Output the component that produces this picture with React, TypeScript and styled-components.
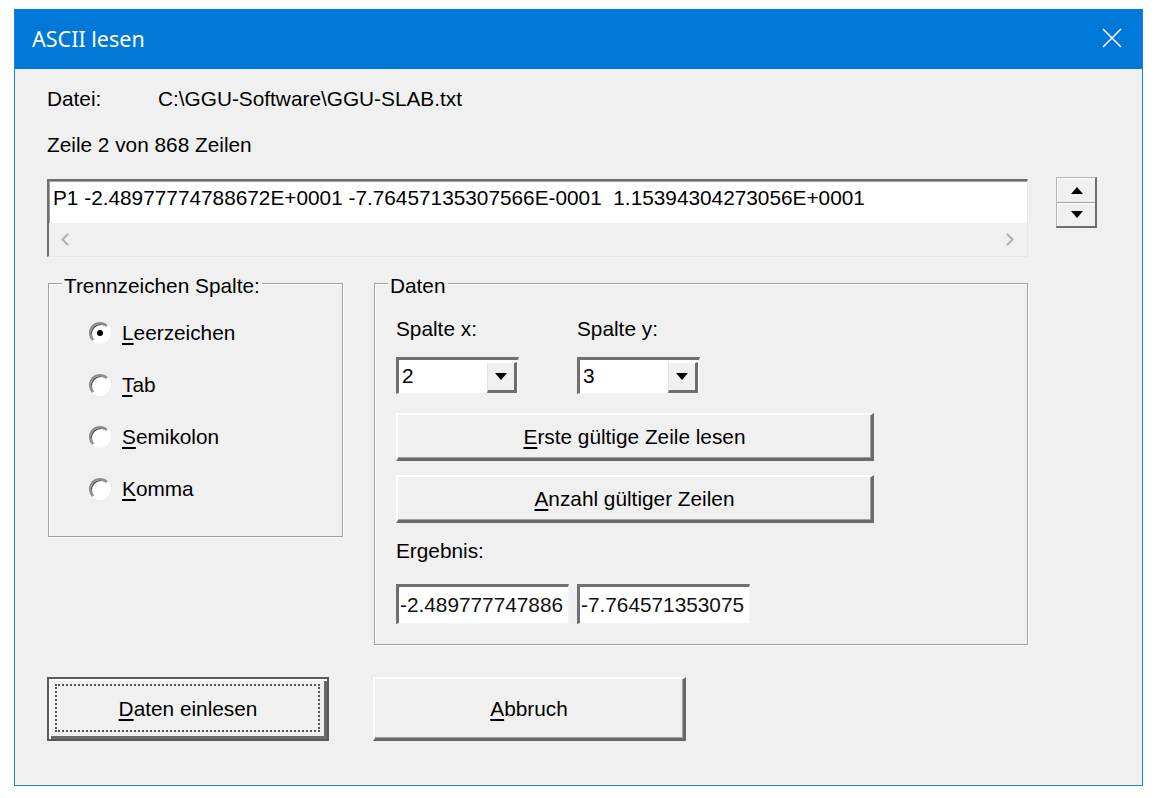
import React from 'react';
import styled, { createGlobalStyle } from 'styled-components';

const GlobalStyle = createGlobalStyle`
  html, body {
    margin: 0;
    padding: 0;
    background: #fff;
  }
  body {
    font-family: "Liberation Sans", Arial, sans-serif;
  }
`;

const Window = styled.div`
  margin: 9px 0 0 14px;
  width: 1129px;
  height: 777px;
  box-sizing: border-box;
  border: 1px solid #1883d7;
  border-top: none;
  display: flex;
  flex-direction: column;
  background: #f0f0f0;
`;

const TitleBar = styled.div`
  flex: none;
  height: 60px;
  background: #0078d7;
  display: flex;
  align-items: center;
  justify-content: space-between;
  padding: 0 20px 0 17px;
  color: #fff;
  font-family: "Noto Sans", "Open Sans", sans-serif;
  font-size: 21.5px;
`;

const Title = styled.span`
  margin-top: -1px;
`;

const CloseIcon = styled.svg`
  display: block;
  margin-top: -2px;
`;

const Body = styled.div`
  flex: 1;
  display: flex;
  flex-direction: column;
  padding: 0 32px;
  font-size: 20.8px;
  color: #000;
`;

const InfoRow = styled.div<{ $gap: number }>`
  display: flex;
  height: 24px;
  line-height: 24px;
  margin-top: ${p => p.$gap}px;
  white-space: nowrap;
`;

const InfoLabel = styled.span`
  width: 111px;
  flex: none;
`;

const SourceRow = styled.div`
  display: flex;
  align-items: flex-start;
  gap: 28px;
  margin-top: 22px;
`;

const LineBox = styled.div`
  width: 981px;
  height: 78px;
  box-sizing: border-box;
  border-style: solid;
  border-width: 2px 1px 1px 2px;
  border-color: #6d6d6d #e6e6e6 #e6e6e6 #6d6d6d;
  box-shadow: inset 1px 1px 0 #a0a0a0;
  background: #fff;
  display: flex;
  flex-direction: column;
`;

const LineText = styled.div`
  flex: 1;
  padding: 5px 0 0 4px;
  line-height: 24px;
  white-space: pre;
  overflow: hidden;
`;

const HScroll = styled.div`
  flex: none;
  height: 33px;
  background: #f0f0f0;
  display: flex;
  align-items: center;
  justify-content: space-between;
  padding: 0 13px 0 12px;
`;

const Spin = styled.div`
  margin-top: -2px;
  width: 41px;
  height: 51px;
  box-sizing: border-box;
  border-style: solid;
  border-width: 1px 2px 2px 1px;
  border-color: #b4b4b4 #6d6d6d #6d6d6d #b4b4b4;
  display: flex;
  flex-direction: column;
  gap: 1px;
  background: #a0a0a0;
`;

const SpinHalf = styled.div`
  flex: 1;
  background: #f0f0f0;
  border-top: 1px solid #fff;
  border-left: 1px solid #fff;
  display: flex;
  align-items: center;
  justify-content: center;
`;

const GroupRow = styled.div`
  display: flex;
  align-items: flex-start;
  gap: 31px;
  margin-top: 26px;
  padding-left: 1px;
`;

const Group = styled.div<{ $w: number; $h: number }>`
  position: relative;
  box-sizing: border-box;
  width: ${p => p.$w}px;
  height: ${p => p.$h}px;
  border: 1px solid #a0a0a0;
  box-shadow: inset 1px 1px 0 #fff, 1px 1px 0 #fff;
`;

const Legend = styled.span`
  position: absolute;
  top: -10px;
  left: 13px;
  padding: 0 2px;
  line-height: 24px;
  background: #f0f0f0;
  white-space: nowrap;
`;

const RadioList = styled.div`
  display: flex;
  flex-direction: column;
  padding: 23px 0 0 40px;
`;

const RadioRow = styled.label`
  display: flex;
  align-items: center;
  gap: 11px;
  height: 52px;
`;

const RadioCircle = styled.span<{ $checked?: boolean }>`
  flex: none;
  width: 22px;
  height: 22px;
  box-sizing: border-box;
  border-radius: 50%;
  border: 2px solid;
  border-color: #8c8c8c #fff #fff #8c8c8c;
  box-shadow: inset 1px 1px 0 #505050;
  background: #fff;
  display: flex;
  align-items: center;
  justify-content: center;

  &::after {
    content: '';
    display: ${p => (p.$checked ? 'block' : 'none')};
    width: 6px;
    height: 6px;
    border-radius: 50%;
    background: #000;
  }
`;

const Key = styled.span`
  text-decoration: underline;
  text-decoration-thickness: 2px;
  text-underline-offset: 3px;
`;

const DataPane = styled.div`
  display: flex;
  flex-direction: column;
  align-items: flex-start;
  padding: 33px 0 0 21px;
`;

const ComboRow = styled.div`
  display: flex;
  gap: 58px;
`;

const ComboColumn = styled.div`
  display: flex;
  flex-direction: column;
  gap: 16px;
`;

const FieldLabel = styled.span<{ $top?: number }>`
  line-height: 24px;
  margin-top: ${p => p.$top ?? 0}px;
`;

const Combo = styled.div`
  width: 123px;
  height: 37px;
  box-sizing: border-box;
  border-style: solid;
  border-width: 3px 1px 1px 3px;
  border-color: #707070 #f4f4f4 #f4f4f4 #707070;
  background: #fff;
  display: flex;
  align-items: stretch;
  padding: 2px 1px 0 0;
`;

const ComboValue = styled.span`
  flex: 1;
  padding-left: 3px;
  line-height: 28px;
`;

const DropButton = styled.span`
  width: 30px;
  box-sizing: border-box;
  background: #f0f0f0;
  border-style: solid;
  border-width: 1px 3px 3px 1px;
  border-color: #fff #6d6d6d #6d6d6d #e3e3e3;
  display: flex;
  align-items: center;
  justify-content: center;
`;

const PushButton = styled.button<{ $w: number; $h: number; $top?: number; $default?: boolean }>`
  position: relative;
  width: ${p => p.$w}px;
  height: ${p => p.$h}px;
  margin: ${p => p.$top ?? 0}px 0 0 0;
  padding: 0;
  box-sizing: border-box;
  background: #f0f0f0;
  font: inherit;
  color: #000;
  border-style: solid;
  border-width: ${p => (p.$default ? '2px' : '2px 3px 3px 2px')};
  border-color: ${p => (p.$default ? '#5a5a5a' : '#fff #6a6a6a #6a6a6a #fff')};
  box-shadow: ${p =>
    p.$default
      ? 'inset 2px 2px 0 #fff, inset -3px -3px 0 #6a6a6a'
      : 'inset -1px -1px 0 #a0a0a0'};

  &::after {
    content: '';
    display: ${p => (p.$default ? 'block' : 'none')};
    position: absolute;
    inset: 5px 7px 7px 6px;
    border: 2px dotted #555;
  }
`;

const ResultRow = styled.div`
  display: flex;
  gap: 8px;
  margin-top: 21px;
`;

const ResultField = styled.div`
  width: 173px;
  height: 40px;
  box-sizing: border-box;
  border-style: solid;
  border-width: 3px 1px 1px 3px;
  border-color: #707070 #f4f4f4 #f4f4f4 #707070;
  background: #fff;
  padding: 0 0 0 1px;
  line-height: 35px;
  white-space: nowrap;
  overflow: hidden;
  color: #111;
`;

const ButtonRow = styled.div`
  display: flex;
  gap: 44px;
  margin-top: 32px;
`;

const Triangle = ({ up }: { up?: boolean }) => (
  <svg width="12" height="7" viewBox="0 0 12 7">
    <polygon points={up ? '6,0 12,7 0,7' : '0,0 12,0 6,7'} fill="#000" />
  </svg>
);

const Chevron = ({ right }: { right?: boolean }) => (
  <svg width="8" height="13" viewBox="0 0 8 13">
    <polyline
      points={right ? '1,1 6.5,6.5 1,12' : '7,1 1.5,6.5 7,12'}
      fill="none"
      stroke="#b0b0b0"
      strokeWidth="2"
    />
  </svg>
);

const separators = [
  { key: 'L', rest: 'eerzeichen', checked: true },
  { key: 'T', rest: 'ab' },
  { key: 'S', rest: 'emikolon' },
  { key: 'K', rest: 'omma' },
];

const App: React.FC = () => {
  return (
    <>
      <GlobalStyle />
      <Window>
        <TitleBar>
          <Title>ASCII lesen</Title>
          <CloseIcon width="20" height="20" viewBox="0 0 20 20">
            <path d="M1 1 L19 19 M19 1 L1 19" stroke="#fff" strokeWidth="1.6" />
          </CloseIcon>
        </TitleBar>
        <Body>
          <InfoRow $gap={18}>
            <InfoLabel>Datei:</InfoLabel>
            <span>C:\GGU-Software\GGU-SLAB.txt</span>
          </InfoRow>
          <InfoRow $gap={22}>Zeile 2 von 868 Zeilen</InfoRow>

          <SourceRow>
            <LineBox>
              <LineText>P1 -2.48977774788672E+0001 -7.76457135307566E-0001  1.15394304273056E+0001</LineText>
              <HScroll>
                <Chevron />
                <Chevron right />
              </HScroll>
            </LineBox>
            <Spin>
              <SpinHalf>
                <Triangle up />
              </SpinHalf>
              <SpinHalf>
                <Triangle />
              </SpinHalf>
            </Spin>
          </SourceRow>

          <GroupRow>
            <Group $w={295} $h={254}>
              <Legend>Trennzeichen Spalte:</Legend>
              <RadioList>
                {separators.map(s => (
                  <RadioRow key={s.key}>
                    <RadioCircle $checked={s.checked} />
                    <span>
                      <Key>{s.key}</Key>
                      {s.rest}
                    </span>
                  </RadioRow>
                ))}
              </RadioList>
            </Group>

            <Group $w={654} $h={362}>
              <Legend>Daten</Legend>
              <DataPane>
                <ComboRow>
                  <ComboColumn>
                    <FieldLabel>Spalte x:</FieldLabel>
                    <Combo>
                      <ComboValue>2</ComboValue>
                      <DropButton>
                        <Triangle />
                      </DropButton>
                    </Combo>
                  </ComboColumn>
                  <ComboColumn>
                    <FieldLabel>Spalte y:</FieldLabel>
                    <Combo>
                      <ComboValue>3</ComboValue>
                      <DropButton>
                        <Triangle />
                      </DropButton>
                    </Combo>
                  </ComboColumn>
                </ComboRow>
                <PushButton $w={478} $h={48} $top={19}>
                  <Key>E</Key>rste gültige Zeile lesen
                </PushButton>
                <PushButton $w={478} $h={48} $top={14}>
                  <Key>A</Key>nzahl gültiger Zeilen
                </PushButton>
                <FieldLabel $top={16}>Ergebnis:</FieldLabel>
                <ResultRow>
                  <ResultField>-2.489777747886</ResultField>
                  <ResultField>-7.764571353075</ResultField>
                </ResultRow>
              </DataPane>
            </Group>
          </GroupRow>

          <ButtonRow>
            <PushButton $w={282} $h={64} $default>
              <Key>D</Key>aten einlesen
            </PushButton>
            <PushButton $w={313} $h={64}>
              <Key>A</Key>bbruch
            </PushButton>
          </ButtonRow>
        </Body>
      </Window>
    </>
  );
};

export default App;
